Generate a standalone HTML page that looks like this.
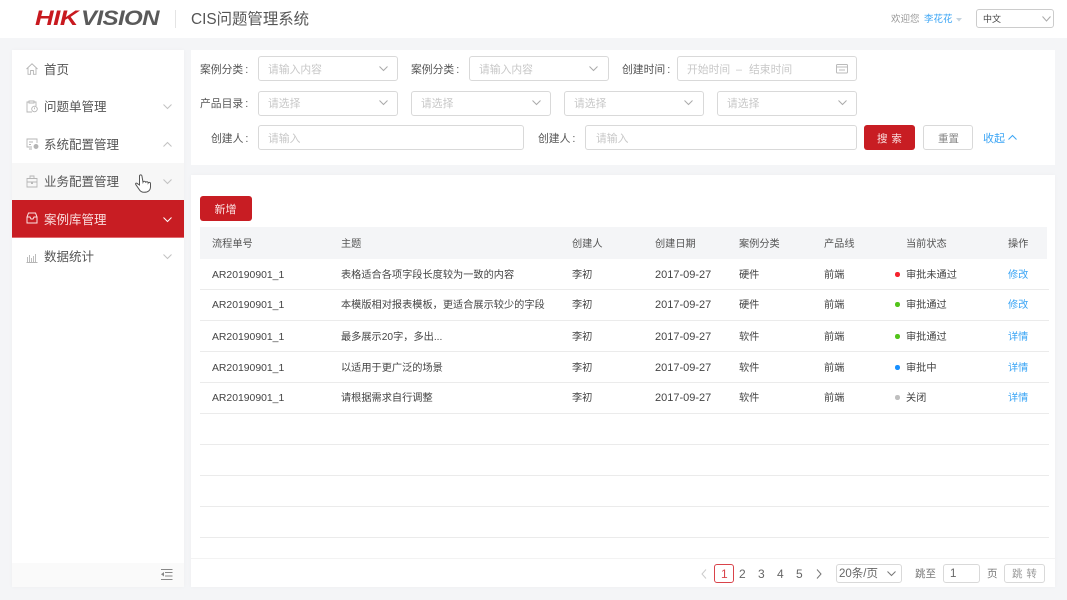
<!DOCTYPE html>
<html lang="zh-CN"><head><meta charset="utf-8"><title>CIS问题管理系统</title>
<style>
html,body{margin:0;padding:0}
body{width:1067px;height:600px;position:relative;overflow:hidden;background:#f4f5f7;font-family:"Liberation Sans","Noto Sans CJK SC",sans-serif;font-size:12px;color:#444}
div,svg{position:absolute;box-sizing:border-box}
.t{white-space:nowrap;line-height:16px;height:16px}
.panel{background:#fff}
.m{font-size:12.5px;color:#555;left:44px;line-height:18px;height:18px;white-space:nowrap}
.box{background:#fff;border:1px solid #d9d9d9;border-radius:3px;height:25px}
.ph{color:#c8c8c8;font-size:10.8px;line-height:16px;height:16px;white-space:nowrap}
.lb{color:#555;font-size:10.8px;line-height:16px;height:16px;white-space:nowrap}
.lb b{font-weight:normal;margin-left:2px}
.line{left:200px;width:849px;height:1px;background:#ebebeb}
.th{color:#555;font-size:10.2px;top:237px;line-height:16px;height:16px;white-space:nowrap}
.c{color:#444;font-size:10.2px;line-height:16px;height:16px;white-space:nowrap;margin-top:1px}
.ar{font-size:10.4px}
.d{font-size:11px;margin-top:0}
.a{color:#3ba5f5;font-size:10.2px;line-height:16px;height:16px;white-space:nowrap;left:1008px;margin-top:1px}
.dot{width:4.5px;height:4.5px;border-radius:50%;left:895px}
.pg{font-size:12px;color:#666;top:566px;line-height:16px;height:16px;white-space:nowrap}
svg{overflow:visible;fill:none}
</style></head><body>

<!-- Header -->
<div class="panel" style="left:0;top:0;width:1067px;height:38px"></div>
<div class="t" style="left:35px;top:6px;height:25px;line-height:25px;font-size:21.5px;font-weight:bold;font-style:italic;color:#c8191f;letter-spacing:-.4px;transform-origin:left center;transform:scaleX(1.2)">HIK</div>
<div class="t" style="left:81px;top:6px;height:25px;line-height:25px;font-size:21.5px;font-weight:bold;font-style:italic;color:#5a5a5a;letter-spacing:-.55px;transform-origin:left center;transform:scaleX(1.12)">VISION</div>
<div style="left:175px;top:10px;width:1px;height:18px;background:#e4e4e4"></div>
<div class="t" style="left:191px;top:9px;height:22px;line-height:22px;font-size:15.4px;color:#555">CIS问题管理系统</div>
<div class="t" style="left:891px;top:12px;font-size:9.5px;color:#999">欢迎您</div>
<div class="t" style="left:924px;top:12px;font-size:9.5px;color:#3ba5f5">李花花</div>
<svg style="left:956px;top:18px" width="6" height="4"><path d="M0 0L6 0L3 3.5Z" fill="#c5d3de"/></svg>
<div class="box" style="left:976px;top:9px;width:78px;height:19px;border-color:#ccc"></div>
<div class="t" style="left:983px;top:11px;font-size:9px;color:#444">中文</div>
<svg style="left:1042px;top:16px" width="9" height="6"><path d="M.5 .5L4.5 5L8.5 .5" stroke="#aaa"/></svg>

<!-- Sidebar -->
<div class="panel" style="left:12px;top:50px;width:172px;height:537px;box-shadow:0 0 4px rgba(0,0,0,.03)"></div>
<div style="left:12px;top:163px;width:172px;height:37px;background:#f7f7f7"></div>
<div style="left:12px;top:200px;width:172px;height:38px;background:#c81d23;border-bottom:1px solid #e06a6e"></div>
<div style="left:12px;top:563px;width:172px;height:24px;background:#fafafa"></div>

<div class="m" style="top:61px">首页</div>
<div class="m" style="top:98px">问题单管理</div>
<div class="m" style="top:136px">系统配置管理</div>
<div class="m" style="top:173px">业务配置管理</div>
<div class="m" style="top:211px;color:#f9dcdc">案例库管理</div>
<div class="m" style="top:248px">数据统计</div>

<svg style="left:26px;top:63px" width="12" height="12" stroke="#b5b5b5" stroke-width=".9"><path d="M.5 6L6 .8L11.5 6M2 5V11.3H4.6V7.5H7.4V11.3H10V5"/></svg>
<svg style="left:26px;top:100px" width="12" height="13" stroke="#b5b5b5" stroke-width=".9"><path d="M6 12H1V2H3M8 2H10V6M3 1H8V3H3Z"/><circle cx="8.5" cy="9" r="2.8"/><path d="M8.5 7.5V9.2"/></svg>
<svg style="left:26px;top:138px" width="13" height="12" stroke="#b5b5b5" stroke-width=".9"><path d="M6 9H1V1H11V5M3 11H6M3 4H7M3 6.5H5"/><circle cx="10" cy="8.5" r="2" fill="#b5b5b5"/></svg>
<svg style="left:26px;top:175px" width="12" height="13" stroke="#b5b5b5" stroke-width=".9"><path d="M1 3.5H11V12H1ZM4 3.5V1H8V3.5M1 7H11M5.5 7V8.5H6.5V7"/></svg>
<svg style="left:26px;top:212px" width="12" height="12" stroke="#fbe3e3" stroke-width="1"><path d="M1 5L2.5 1H9.5L11 5V11H1ZM1 5H4L5 7H7L8 5H11"/></svg>
<svg style="left:26px;top:251px" width="12" height="12" stroke="#b5b5b5" stroke-width=".9"><path d="M.5 11.5H11.5M1.5 11V6M3.5 11V4M5.5 11V7M7.5 11V5M9.5 11V3"/></svg>

<svg style="left:163px;top:104px" width="9" height="5" stroke="#c2c2c2"><path d="M.5 .5L4.5 4.5L8.5 .5"/></svg>
<svg style="left:163px;top:142px" width="9" height="5" stroke="#c2c2c2"><path d="M.5 4.5L4.5 .5L8.5 4.5"/></svg>
<svg style="left:163px;top:179px" width="9" height="5" stroke="#c2c2c2"><path d="M.5 .5L4.5 4.5L8.5 .5"/></svg>
<svg style="left:163px;top:217px" width="9" height="5" stroke="#fff"><path d="M.5 .5L4.5 4.5L8.5 .5"/></svg>
<svg style="left:163px;top:254px" width="9" height="5" stroke="#c2c2c2"><path d="M.5 .5L4.5 4.5L8.5 .5"/></svg>

<!-- Hand cursor -->
<svg style="left:135px;top:174px" width="17" height="19"><path d="M4.5 11L1.8 9.2C.8 8.8 .2 9.8 .8 10.6L4.2 15.5C5.2 17.2 6.6 18.3 9 18.3C12.8 18.3 15.5 16.5 15.5 12.8V9.5C15.5 8.3 13.8 8 13.2 9C13.2 7.6 11.2 7.2 10.6 8.6C10.6 7 8.5 6.9 8 8.2L6.9 1.8C6.6 .4 4.4 .6 4.5 2.2Z" fill="#fff" stroke="#555" stroke-width="1"/></svg>

<svg style="left:161px;top:569px" width="12" height="12" stroke="#888" stroke-width="1"><path d="M0 .5H11.5M4 3.5H11.5M4 7H11.5M0 10.5H11.5"/><path d="M3 3L0 5.2L3 7.5Z" fill="#888" stroke="none"/></svg>

<!-- Filter panel -->
<div class="panel" style="left:191px;top:50px;width:864px;height:115px"></div>
<div class="lb" style="left:200px;top:62px">案例分类<b>:</b></div>
<div class="box" style="left:258px;top:56px;width:140px"></div>
<div class="ph" style="left:268px;top:62px">请输入内容</div>
<svg style="left:379px;top:66px" width="9" height="5" stroke="#aaa"><path d="M.5 .5L4.5 4.5L8.5 .5"/></svg>
<div class="lb" style="left:411px;top:62px">案例分类<b>:</b></div>
<div class="box" style="left:469px;top:56px;width:140px"></div>
<div class="ph" style="left:479px;top:62px">请输入内容</div>
<svg style="left:589px;top:66px" width="9" height="5" stroke="#aaa"><path d="M.5 .5L4.5 4.5L8.5 .5"/></svg>
<div class="lb" style="left:622px;top:62px">创建时间<b>:</b></div>
<div class="box" style="left:677px;top:56px;width:180px"></div>
<div class="ph" style="left:687px;top:62px">开始时间</div>
<div class="ph" style="left:736px;top:62px">–</div>
<div class="ph" style="left:749px;top:62px">结束时间</div>
<svg style="left:836px;top:64px" width="12" height="10" stroke="#bbb"><rect x=".5" y=".5" width="11" height="8.5" rx="1"/><path d="M.5 3H11.5M3 6H9"/></svg>

<div class="lb" style="left:200px;top:96px">产品目录<b>:</b></div>
<div class="box" style="left:258px;top:91px;width:140px"></div>
<div class="ph" style="left:268px;top:96px">请选择</div>
<svg style="left:379px;top:100px" width="9" height="5" stroke="#aaa"><path d="M.5 .5L4.5 4.5L8.5 .5"/></svg>
<div class="box" style="left:411px;top:91px;width:140px"></div>
<div class="ph" style="left:421px;top:96px">请选择</div>
<svg style="left:532px;top:100px" width="9" height="5" stroke="#aaa"><path d="M.5 .5L4.5 4.5L8.5 .5"/></svg>
<div class="box" style="left:564px;top:91px;width:140px"></div>
<div class="ph" style="left:574px;top:96px">请选择</div>
<svg style="left:684px;top:100px" width="9" height="5" stroke="#aaa"><path d="M.5 .5L4.5 4.5L8.5 .5"/></svg>
<div class="box" style="left:717px;top:91px;width:140px"></div>
<div class="ph" style="left:727px;top:96px">请选择</div>
<svg style="left:838px;top:100px" width="9" height="5" stroke="#aaa"><path d="M.5 .5L4.5 4.5L8.5 .5"/></svg>

<div class="lb" style="left:211px;top:131px">创建人<b>:</b></div>
<div class="box" style="left:258px;top:125px;width:266px"></div>
<div class="ph" style="left:268px;top:131px">请输入</div>
<div class="lb" style="left:538px;top:131px">创建人<b>:</b></div>
<div class="box" style="left:585px;top:125px;width:272px"></div>
<div class="ph" style="left:596px;top:131px">请输入</div>
<div style="left:864px;top:125px;width:51px;height:25px;background:#c81d23;border-radius:3px"></div>
<div class="t" style="left:877px;top:131px;font-size:10.5px;color:#fbe3e3;letter-spacing:.5px">搜 索</div>
<div class="box" style="left:923px;top:125px;width:50px"></div>
<div class="t" style="left:938px;top:131px;font-size:10.5px;color:#888">重置</div>
<div class="t" style="left:983px;top:131px;font-size:11px;color:#3ba5f5">收起</div>
<svg style="left:1008px;top:135px" width="9" height="5" stroke="#3ba5f5"><path d="M.5 4.5L4.5 .5L8.5 4.5"/></svg>

<!-- Table panel -->
<div class="panel" style="left:191px;top:175px;width:864px;height:412px;box-shadow:0 0 4px rgba(0,0,0,.03)"></div>
<div style="left:200px;top:196px;width:52px;height:25px;background:#c81d23;border-radius:3px"></div>
<div class="t" style="left:214.5px;top:202px;font-size:11px;color:#fbe3e3">新增</div>
<div style="left:200px;top:227px;width:847px;height:32px;background:#f4f5f7"></div>

<div class="th" style="left:212px">流程单号</div>
<div class="th" style="left:341px">主题</div>
<div class="th" style="left:572px">创建人</div>
<div class="th" style="left:655px">创建日期</div>
<div class="th" style="left:739px">案例分类</div>
<div class="th" style="left:824px">产品线</div>
<div class="th" style="left:906px">当前状态</div>
<div class="th" style="left:1008px">操作</div>

<div class="line" style="top:289px"></div>
<div class="line" style="top:320px"></div>
<div class="line" style="top:351px"></div>
<div class="line" style="top:382px"></div>
<div class="line" style="top:413px"></div>
<div class="line" style="top:444px"></div>
<div class="line" style="top:475px"></div>
<div class="line" style="top:506px"></div>
<div class="line" style="top:537px"></div>

<div class="c ar" style="left:212px;top:267px">AR20190901_1</div><div class="c" style="left:341px;top:267px">表格适合各项字段长度较为一致的内容</div><div class="c" style="left:572px;top:267px">李初</div><div class="c d" style="left:655px;top:267px">2017-09-27</div><div class="c" style="left:739px;top:267px">硬件</div><div class="c" style="left:824px;top:267px">前端</div><div class="dot" style="top:272px;background:#f5222d"></div><div class="c" style="left:906px;top:267px">审批未通过</div><div class="a" style="top:267px">修改</div>

<div class="c ar" style="left:212px;top:297px">AR20190901_1</div><div class="c" style="left:341px;top:297px">本模版相对报表模板，更适合展示较少的字段</div><div class="c" style="left:572px;top:297px">李初</div><div class="c d" style="left:655px;top:297px">2017-09-27</div><div class="c" style="left:739px;top:297px">硬件</div><div class="c" style="left:824px;top:297px">前端</div><div class="dot" style="top:302px;background:#52c41a"></div><div class="c" style="left:906px;top:297px">审批通过</div><div class="a" style="top:297px">修改</div>

<div class="c ar" style="left:212px;top:329px">AR20190901_1</div><div class="c" style="left:341px;top:329px">最多展示20字，多出...</div><div class="c" style="left:572px;top:329px">李初</div><div class="c d" style="left:655px;top:329px">2017-09-27</div><div class="c" style="left:739px;top:329px">软件</div><div class="c" style="left:824px;top:329px">前端</div><div class="dot" style="top:334px;background:#52c41a"></div><div class="c" style="left:906px;top:329px">审批通过</div><div class="a" style="top:329px">详情</div>

<div class="c ar" style="left:212px;top:360px">AR20190901_1</div><div class="c" style="left:341px;top:360px">以适用于更广泛的场景</div><div class="c" style="left:572px;top:360px">李初</div><div class="c d" style="left:655px;top:360px">2017-09-27</div><div class="c" style="left:739px;top:360px">软件</div><div class="c" style="left:824px;top:360px">前端</div><div class="dot" style="top:365px;background:#1890ff"></div><div class="c" style="left:906px;top:360px">审批中</div><div class="a" style="top:360px">详情</div>

<div class="c ar" style="left:212px;top:390px">AR20190901_1</div><div class="c" style="left:341px;top:390px">请根据需求自行调整</div><div class="c" style="left:572px;top:390px">李初</div><div class="c d" style="left:655px;top:390px">2017-09-27</div><div class="c" style="left:739px;top:390px">软件</div><div class="c" style="left:824px;top:390px">前端</div><div class="dot" style="top:395px;background:#bfbfbf"></div><div class="c" style="left:906px;top:390px">关闭</div><div class="a" style="top:390px">详情</div>

<!-- Pagination -->
<div style="left:191px;top:558px;width:864px;height:1px;background:#f3f3f3"></div>
<svg style="left:701px;top:569px" width="6" height="10" stroke="#ccc"><path d="M5 .5L1 5L5 9.5"/></svg>
<div style="left:714px;top:564px;width:20px;height:19px;border:1px solid #d9434a;border-radius:3px"></div>
<div class="pg" style="left:721px;color:#d9434a">1</div>
<div class="pg" style="left:739px">2</div>
<div class="pg" style="left:758px">3</div>
<div class="pg" style="left:777px">4</div>
<div class="pg" style="left:796px">5</div>
<svg style="left:816px;top:569px" width="6" height="10" stroke="#777"><path d="M1 .5L5 5L1 9.5"/></svg>
<div class="box" style="left:836px;top:564px;width:66px;height:19px"></div>
<div class="t" style="left:839px;top:566px;font-size:11.5px;color:#666">20条/页</div>
<svg style="left:887px;top:571px" width="9" height="5" stroke="#777"><path d="M.5 .5L4.5 4.5L8.5 .5"/></svg>
<div class="t" style="left:915px;top:566px;font-size:10.5px;color:#777">跳至</div>
<div class="box" style="left:943px;top:564px;width:37px;height:19px"></div>
<div class="t" style="left:950px;top:566px;font-size:11.5px;color:#666">1</div>
<div class="t" style="left:987px;top:566px;font-size:10.5px;color:#777">页</div>
<div class="box" style="left:1004px;top:564px;width:41px;height:19px"></div>
<div class="t" style="left:1012px;top:566px;font-size:10.5px;color:#999;letter-spacing:.5px">跳 转</div>

</body></html>
